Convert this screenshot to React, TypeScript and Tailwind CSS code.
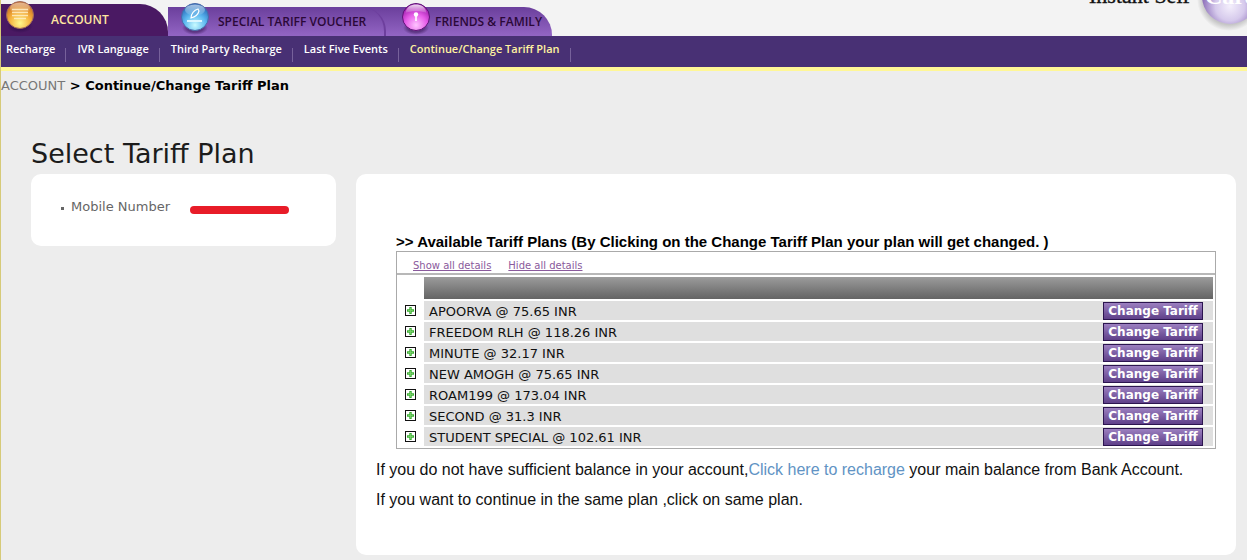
import React, { ReactNode, useState } from 'react';

type OrbKind = 'account' | 'voucher' | 'friends';

interface Plan {
    name: string;
    price: string;
}

const menuItems = ['Recharge', 'IVR Language', 'Third Party Recharge', 'Last Five Events', 'Continue/Change Tariff Plan'];

const plans: Plan[] = [
    { name: 'APOORVA', price: '75.65' },
    { name: 'FREEDOM RLH', price: '118.26' },
    { name: 'MINUTE', price: '32.17' },
    { name: 'NEW AMOGH', price: '75.65' },
    { name: 'ROAM199', price: '173.04' },
    { name: 'SECOND', price: '31.3' },
    { name: 'STUDENT SPECIAL', price: '102.61' }
];

const orbColors: Record<OrbKind, { light: string; mid: string; dark: string; rim: string }> = {
    account: { light: '#fff88c', mid: '#f5b03c', dark: '#c0601c', rim: '#a06a5c' },
    voucher: { light: '#c8fbff', mid: '#5cb8f0', dark: '#1f5cb0', rim: '#4a6aa8' },
    friends: { light: '#ffc4ff', mid: '#e65ce8', dark: '#8c0c9c', rim: '#5d1276' }
};

const Orb = ({ kind }: { kind: OrbKind }) => {
    const { light, mid, dark, rim } = orbColors[kind];

    return (
        <svg viewBox="0 0 32 34" className="h-[34px] w-8 shrink-0" aria-hidden="true">
            <defs>
                <radialGradient id={`orb-${kind}`} cx="0.5" cy="0.8" r="0.8">
                    <stop offset="0" stopColor={light} />
                    <stop offset="0.5" stopColor={mid} />
                    <stop offset="1" stopColor={dark} />
                </radialGradient>
                <linearGradient id={`gloss-${kind}`} x1="0" y1="0" x2="0" y2="1">
                    <stop offset="0" stopColor="#fff" stopOpacity="0.85" />
                    <stop offset="1" stopColor="#fff" stopOpacity="0.1" />
                </linearGradient>
                <radialGradient id={`shade-${kind}`}>
                    <stop offset="0.6" stopColor="#2c0c48" stopOpacity="0.5" />
                    <stop offset="1" stopColor="#2c0c48" stopOpacity="0" />
                </radialGradient>
            </defs>
            <ellipse cx="16" cy="27" rx="13" ry="7" fill={`url(#shade-${kind})`} />
            <circle cx="16" cy="16" r="13.5" fill={`url(#orb-${kind})`} stroke={rim} />
            {kind === 'account' && (
                <>
                    <ellipse cx="16" cy="9" rx="10" ry="5.5" fill="url(#gloss-account)" opacity="0.6" />
                    <path d="M8 10.5h16M8 13.5h16M8 16.5h16M10 19.5h12" stroke="#fff0c8" strokeWidth="1.3" opacity="0.85" />
                </>
            )}
            {kind === 'voucher' && (
                <>
                    <ellipse cx="16" cy="9" rx="10" ry="5.5" fill="url(#gloss-voucher)" opacity="0.7" />
                    <path d="M12 17c0-4 3-8 7-9l1 2c-1 4-4 6-8 7z" fill="#6cb4e8" stroke="#fff" strokeWidth="1.1" />
                    <path d="M8 20h15" stroke="#e4faff" strokeWidth="1.8" />
                </>
            )}
            {kind === 'friends' && (
                <>
                    <path d="M5.5 12C6.500 5.500 11 3.500 16 3.500S25.500 5.500 26.500 12C22 9.500 10 9.500 5.500 12z" fill="url(#gloss-friends)" />
                    <circle cx="16" cy="13.500" r="2.200" fill="#fff" />
                    <path d="M16 14v6" stroke="#fff" strokeWidth="1.6" />
                </>
            )}
        </svg>
    );
};

const Logo = () => (
    <svg viewBox="0 0 164 36" className="ml-auto h-9 w-[164px] shrink-0" role="img" aria-label="Instant Self Care">
        <defs>
            <radialGradient id="logo-ball" cx="0.5" cy="0.68" r="0.58">
                <stop offset="0" stopColor="#f4effc" />
                <stop offset="0.45" stopColor="#d6caec" />
                <stop offset="1" stopColor="#7450a8" />
            </radialGradient>
            <radialGradient id="logo-shadow">
                <stop offset="0.8" stopColor="#999" stopOpacity="0.5" />
                <stop offset="1" stopColor="#999" stopOpacity="0" />
            </radialGradient>
        </defs>
        <circle cx="146" cy="-1" r="32" fill="url(#logo-shadow)" />
        <circle cx="147" cy="-4" r="28" fill="url(#logo-ball)" />
        <text x="6" y="3" fontFamily="Liberation Serif, serif" fontSize="22" fontWeight="400" fill="#111" stroke="#111" strokeWidth="0.4">Instant Self</text>
        <text x="122" y="4" fontFamily="Liberation Serif, serif" fontSize="24" fontWeight="700" fill="#fff">Care</text>
    </svg>
);

const TariffRow = ({ name, price, isOpen, onToggle }: Plan & { isOpen: boolean; onToggle: () => void }) => (
    <tr>
        <td className="h-[19px] p-0 align-top">
            <button type="button" aria-label={`Details of ${name}`} aria-expanded={isOpen} onClick={onToggle} className="ml-1.5 mt-1 block">
                <svg viewBox="0 0 11 11" className="size-[11px]" aria-hidden="true">
                    <rect x="0.5" y="0.5" width="10" height="10" fill="#fff" stroke="#111" />
                    <path d={isOpen ? 'M2 5.5h7' : 'M2 5.5h7M5.5 2v7'} stroke="#3cae35" strokeWidth="2.4" />
                    <path d={isOpen ? 'M3 5.5h5' : 'M3 5.5h5M5.5 3v5'} stroke="#7fd36f" strokeWidth="0.8" />
                </svg>
            </button>
        </td>
        <td className="h-[19px] bg-[#dfdfdf] p-0">
            <div className="flex h-[19px] items-center justify-between pl-[5px] pr-2.5">
                <span className="pt-0.5">{name} @ {price} INR</span>
                <button
                    type="button"
                    className="h-[18px] w-[100px] whitespace-nowrap border border-[#2c1550] bg-linear-to-b from-[#9c80c0] to-[#5f4089] text-xs leading-4 font-bold text-white"
                >
                    Change Tariff
                </button>
            </div>
        </td>
    </tr>
);

const DetailLink = ({ children, onClick }: { children: ReactNode; onClick: () => void }) => (
    <a href="#plans" onClick={onClick} className="text-[#8a5a9c] underline">{children}</a>
);

export default function App() {
    const [opened, setOpened] = useState<string[]>([]);

    const toggle = (name: string) =>
        setOpened(opened.includes(name) ? opened.filter((item) => item !== name) : [...opened, name]);

    return (
        <div className="min-h-screen border-l border-[#d6ca78] bg-[#ededed] font-['DejaVu_Sans',Verdana,sans-serif] text-[13px] text-[#111]">
            <header className="flex h-9 overflow-hidden bg-[#f3f3f3] font-['Open_Sans',sans-serif] text-xs font-semibold text-[#2b0838]">
                <nav className="flex items-end" aria-label="Sections">
                    <a href="#account" className="flex h-8 w-[167px] items-center rounded-tr-[28px] bg-[#4a1963] pl-[3px] text-[#ffe6a0]">
                        <span className="-mt-2 mr-[15px]"><Orb kind="account" /></span>
                        ACCOUNT
                    </a>
                    <div className="flex h-[29px] rounded-tr-[28px] bg-linear-to-b from-[#6b3f9c] to-[#9365c4]">
                        <a href="#voucher" className="flex w-[218px] items-center whitespace-nowrap rounded-tr-[24px] border-r-2 border-[#6d3f9d] pl-[11px]">
                            <span className="-mt-2 mr-[7px]"><Orb kind="voucher" /></span>
                            SPECIAL TARIFF VOUCHER
                        </a>
                        <a href="#friends" className="flex w-[166px] items-center whitespace-nowrap pl-3.5">
                            <span className="-mt-2 mr-[3px]"><Orb kind="friends" /></span>
                            FRIENDS &amp; FAMILY
                        </a>
                    </div>
                </nav>
                <Logo />
            </header>

            <nav className="flex h-[35px] border-b-4 border-[#fff796] bg-[#483074] pl-[5px] font-['Open_Sans',sans-serif] text-[11px] leading-[26px] font-semibold text-white" aria-label="Account">
                {menuItems.map((item, index) => (
                    <React.Fragment key={item}>
                        <a href="#menu" className={index === menuItems.length - 1 ? 'text-[#fff3a0]' : ''}>{item}</a>
                        <span className="ml-2.5 mr-[11px] mt-3 h-3.5 w-px bg-[#77619b]" />
                    </React.Fragment>
                ))}
            </nav>

            <p className="mt-[7px] leading-4 font-bold text-black">
                <a href="#account" className="font-normal text-[#777]">ACCOUNT</a> &gt; Continue/Change Tariff Plan
            </p>

            <main className="pl-[30px] pr-[11px] pb-1.5">
                <h1 className="pt-10 text-[27px] leading-10 text-[#1c1c1c]">Select Tariff Plan</h1>

                <div className="grid grid-cols-[305px_1fr] items-start gap-5">
                    <aside className="flex h-[72px] items-start rounded-[10px] bg-white pl-[30px] pt-[25px] leading-4 text-[#666]">
                        <span className="mr-1 mt-2 size-[3px] bg-[#666]" />
                        <span className="ml-[3px]">Mobile Number</span>
                        <span className="ml-5 mt-[7px] h-2 w-[99px] rounded-full bg-[#e81c28]" />
                    </aside>

                    <section id="plans" className="rounded-[10px] bg-white px-5 pt-[58px] pb-10 font-['Liberation_Sans',Arial,sans-serif]">
                        <h2 className="pl-5 text-[15px] leading-[19px] font-bold text-black">
                            &gt;&gt; Available Tariff Plans (By Clicking on the Change Tariff Plan your plan will get changed. )
                        </h2>
                        <div className="ml-5 border border-[#aaa] font-['DejaVu_Sans',Verdana,sans-serif]">
                            <div className="flex h-[23px] gap-[17px] border-b-2 border-[#b8b8b8] pl-4 pt-1.5 text-[10px] leading-4">
                                <DetailLink onClick={() => setOpened(plans.map((plan) => plan.name))}>Show all details</DetailLink>
                                <DetailLink onClick={() => setOpened([])}>Hide all details</DetailLink>
                            </div>
                            <table className="w-full table-fixed border-separate border-spacing-[2px] leading-[19px]">
                                <colgroup>
                                    <col className="w-[23px]" />
                                    <col />
                                </colgroup>
                                <thead>
                                    <tr>
                                        <td className="h-[22px] p-0" />
                                        <td className="h-[22px] bg-linear-to-b from-[#9c9c9c] to-[#646464] p-0" />
                                    </tr>
                                </thead>
                                <tbody>
                                    {plans.map((plan) => (
                                        <TariffRow key={plan.name} {...plan} isOpen={opened.includes(plan.name)} onToggle={() => toggle(plan.name)} />
                                    ))}
                                </tbody>
                            </table>
                        </div>
                        <div className="pt-1.5 text-base leading-[30px]">
                            <p>
                                If you do not have sufficient balance in your account,
                                <a href="#recharge" className="text-[#6193c4]">Click here to recharge</a> your main balance from Bank Account.
                            </p>
                            <p>If you want to continue in the same plan ,click on same plan.</p>
                        </div>
                    </section>
                </div>
            </main>
        </div>
    );
}
